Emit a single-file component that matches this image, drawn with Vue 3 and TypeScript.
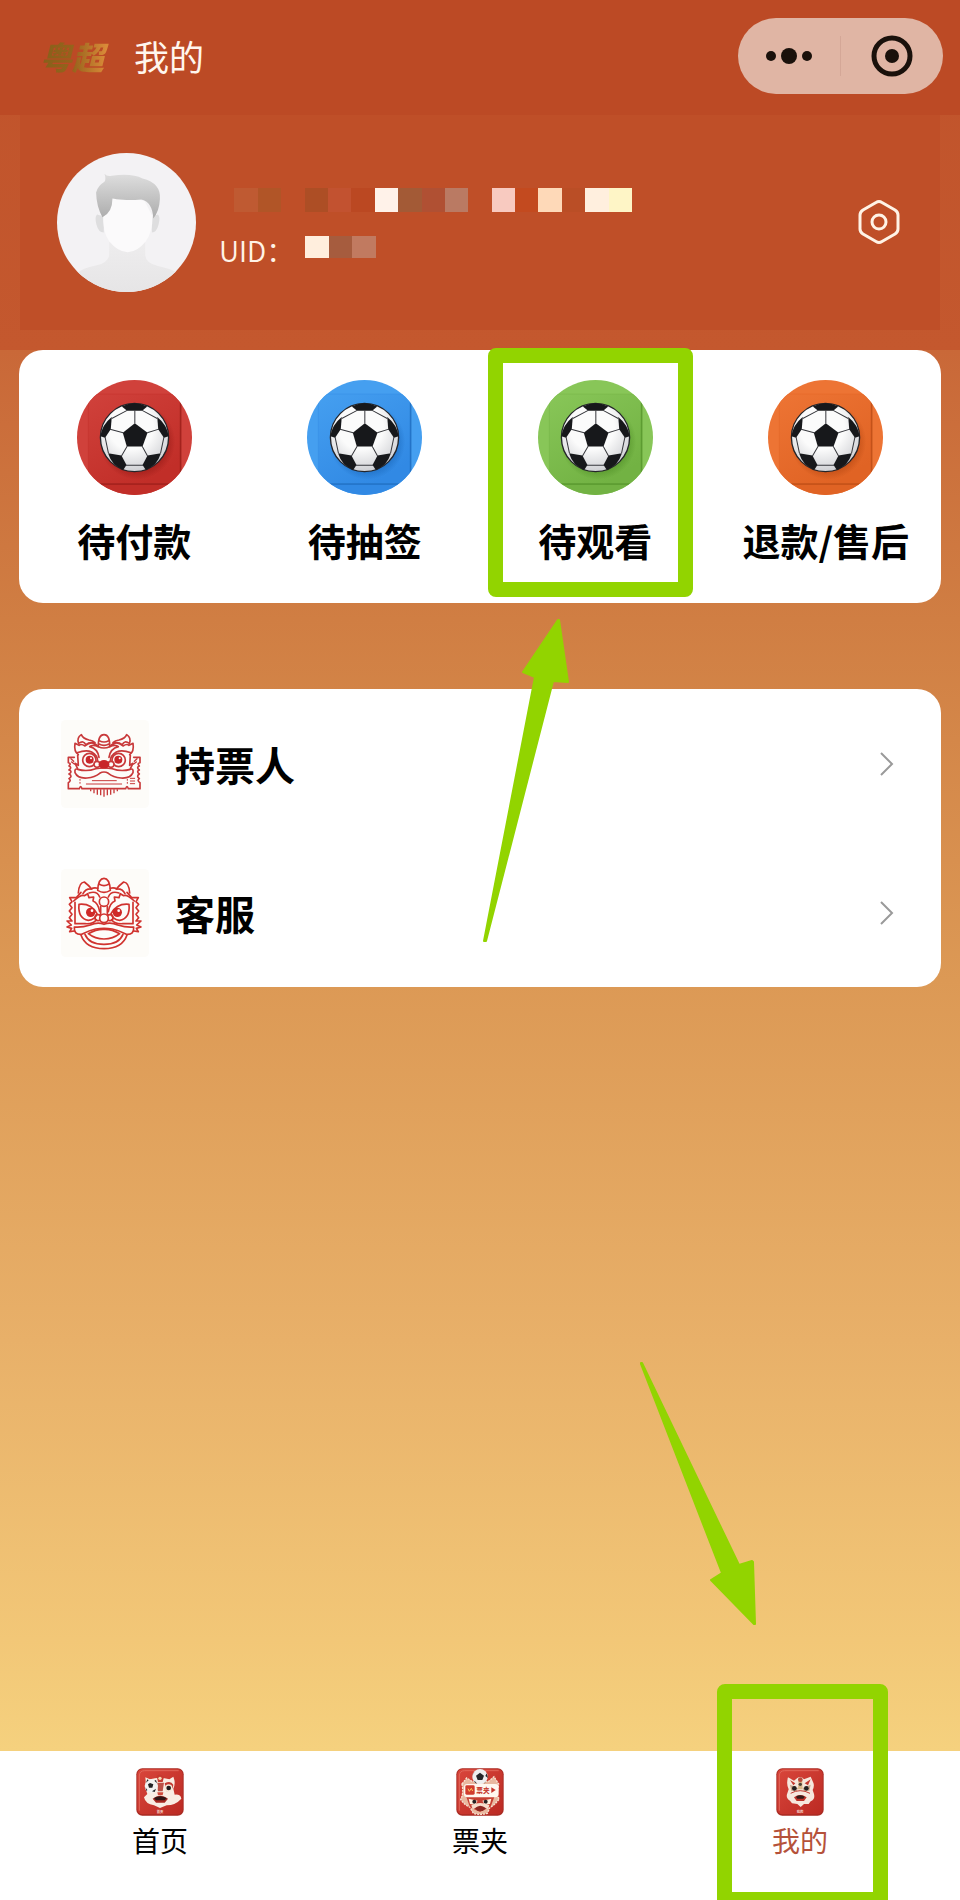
<script setup lang="ts">
interface Cell { at: number; color: string }
interface Quick { label: string; from: string; to: string; edge: string; marked?: boolean }

const nameCells: Cell[] = [
  { at: 1, color: '#bf5a32' }, { at: 2, color: '#b15527' }, { at: 4, color: '#ad4e25' },
  { at: 5, color: '#c25230' }, { at: 6, color: '#bb4822' }, { at: 7, color: '#fff2e9' },
  { at: 8, color: '#a35a36' }, { at: 9, color: '#b05033' }, { at: 10, color: '#ba7a63' },
  { at: 12, color: '#f8cac0' }, { at: 13, color: '#c34a1f' }, { at: 14, color: '#fed9b8' },
  { at: 15, color: '#ba4e26' }, { at: 16, color: '#ffefde' }, { at: 17, color: '#fef5c6' },
]
const uidCells: Cell[] = [
  { at: 0, color: '#ffeedd' }, { at: 1, color: '#a65c3e' }, { at: 2, color: '#c17a60' },
]
const quicks: Quick[] = [
  { label: '待付款', from: '#d0413b', to: '#c12e28', edge: '#8f1713' },
  { label: '待抽签', from: '#459ff0', to: '#3189e4', edge: '#1763b5' },
  { label: '待观看', from: '#88c658', to: '#72b243', edge: '#4b8a22', marked: true },
  { label: '退款/售后', from: '#ed7434', to: '#e06324', edge: '#b0430f' },
]
const rows = [
  { label: '持票人', icon: 'ticket' },
  { label: '客服', icon: 'service' },
]
const tabs = [
  { label: '首页', icon: 'home' },
  { label: '票夹', icon: 'wallet' },
  { label: '我的', icon: 'mine' },
]
</script>

<template>
  <div class="page">
    <div class="hero">
      <header class="bar">
        <span class="logo">粤超</span>
        <h1 class="title">我的</h1>
        <div class="capsule">
          <button class="cap-btn" type="button" aria-label="更多">
            <svg width="46" height="18" viewBox="0 0 46 18"><circle cx="5" cy="9" r="5" /><circle cx="23" cy="9" r="8" /><circle cx="41" cy="9" r="5" /></svg>
          </button>
          <span class="cap-line"></span>
          <button class="cap-btn" type="button" aria-label="关闭">
            <svg width="42" height="42" viewBox="0 0 42 42"><circle cx="21" cy="21" r="18" fill="none" stroke="#1a110b" stroke-width="5" /><circle cx="21" cy="21" r="7" /></svg>
          </button>
        </div>
      </header>

      <section class="profile">
        <svg class="avatar" viewBox="0 0 416 416">
          <defs>
            <clipPath id="face"><circle cx="208" cy="208" r="208" /></clipPath>
            <linearGradient id="hair" x1="0" y1="0" x2="0" y2="1"><stop offset="0" stop-color="#dedede" /><stop offset="1" stop-color="#acacac" /></linearGradient>
            <linearGradient id="neck" x1="0" y1="0" x2="0" y2="1"><stop offset="0" stop-color="#efeeef" /><stop offset="1" stop-color="#e6e5e6" /></linearGradient>
          </defs>
          <g clip-path="url(#face)">
            <rect width="416" height="416" fill="#f3f2f4" />
            <path d="M156 240V308Q150 330 116 337Q76 344 58 362V416H360V358Q340 346 302 338Q266 330 264 306V240Z" fill="url(#neck)" />
            <path d="M120 184Q112 190 118 214Q124 238 140 238V190ZM302 184Q310 190 304 214Q298 238 284 238V190Z" fill="#dededf" />
            <path d="M138 180L166 134Q230 132 262 144L286 190Q286 236 266 264Q240 296 212 297Q182 296 156 264Q136 236 138 180Z" fill="#fbfafb" />
            <path d="M142 62Q150 72 164 68Q224 60 256 76Q312 90 308 138Q306 176 288 196Q286 146 252 139Q222 142 198 140Q174 138 166 136Q166 178 136 192Q118 160 117 118Q122 98 142 86Q148 78 142 62Z" fill="url(#hair)" />
          </g>
        </svg>
        <div class="who">
          <svg class="name-mask" viewBox="0 0 18 1" preserveAspectRatio="none" shape-rendering="crispEdges" role="img" aria-label="昵称">
            <rect v-for="c in nameCells" :key="c.at" :x="c.at" y="0" width="1" height="1" :fill="c.color" />
          </svg>
          <div class="uid">
            <span>UID：</span>
            <svg class="uid-mask" viewBox="0 0 3 1" preserveAspectRatio="none" shape-rendering="crispEdges" role="img" aria-label="编号">
              <rect v-for="c in uidCells" :key="c.at" :x="c.at" y="0" width="1" height="1" :fill="c.color" />
            </svg>
          </div>
        </div>
        <button class="gear" type="button" aria-label="设置">
          <svg width="44" height="48" viewBox="0 0 44 48" fill="none" stroke="#fff3e6" stroke-width="3">
            <path d="M19 3.500Q22 1.500 25 3.500L38 11Q41 13 41 16V30Q41 33 38 35L25 42.500Q22 44.500 19 42.500L6 35Q3 33 3 30V16Q3 13 6 11Z" />
            <circle cx="22" cy="23" r="7" />
          </svg>
        </button>
      </section>
    </div>

    <main class="content">
      <section class="card quick">
        <button v-for="(q, i) in quicks" :key="q.label" class="tile" type="button">
          <svg class="ball" viewBox="0 0 344 344">
            <defs>
              <clipPath :id="`disc${i}`"><circle cx="172" cy="172" r="172" /></clipPath>
              <linearGradient :id="`bg${i}`" x1="0" y1="0" x2="0.600" y2="1"><stop offset="0" :stop-color="q.from" /><stop offset="1" :stop-color="q.to" /></linearGradient>
              <radialGradient :id="`sh${i}`"><stop offset="0.700" :stop-color="q.edge" stop-opacity="0.700" /><stop offset="1" :stop-color="q.edge" stop-opacity="0" /></radialGradient>
              <radialGradient :id="`wh${i}`" cx="0.450" cy="0.350" r="0.650"><stop offset="0.500" stop-color="#fbfbfb" /><stop offset="1" stop-color="#cfd0d4" /></radialGradient>
            </defs>
            <g :clip-path="`url(#disc${i})`">
              <rect width="344" height="344" :fill="q.from" />
              <path d="M0 310H344V344H0Z" :fill="q.to" />
              <rect x="34" y="42" width="276" height="268" :fill="`url(#bg${i})`" />
              <path d="M34 310V42H310" fill="none" :stroke="q.to" stroke-width="2" opacity="0.600" />
              <path d="M310 60V311H50" fill="none" :stroke="q.edge" stroke-width="5" opacity="0.650" />
              <circle cx="180" cy="184" r="114" :fill="`url(#sh${i})`" />
            </g>
            <circle cx="172" cy="172" r="102" :fill="`url(#wh${i})`" stroke="#24252a" stroke-width="4" />
            <g fill="#17181b">
              <path d="M173 129L211 158L196 199H149L137 158Z" />
              <path d="M134 79L150 92H195L210 79Q172 60 134 79Z" />
              <path d="M240 111L243 147L260 173L274 168Q269 134 240 111Z" />
              <path d="M104 111L101 147L84 173L70 168Q75 134 104 111Z" />
              <path d="M251 219L211 226L196 254L206 269Q240 256 251 219Z" />
              <path d="M93 219L133 226L148 254L138 269Q104 256 93 219Z" />
            </g>
            <path d="M173 130V91M210 158L245 147M195 198L211 227M150 198L133 227M138 158L99 147M195 91L240 115M150 91L104 115M260 171L250 219M84 171L94 219M146 255H198" fill="none" stroke="#36373c" stroke-width="3" />
          </svg>
          <span class="tile-label">{{ q.label }}</span>
          <span v-if="q.marked" class="mark"></span>
          <svg v-if="q.marked" class="arrow arrow-up" width="90" height="326" viewBox="482 618 90 326">
            <path d="M558 620L559 620L568 682L553 681L486 941L484 941L535 677L523 672Z" />
          </svg>
        </button>
      </section>

      <section class="card list">
        <a v-for="r in rows" :key="r.label" class="row" href="#">
          <svg v-if="r.icon === 'ticket'" class="lion" viewBox="66 54 264 264">
            <rect x="66" y="54" width="264" height="264" rx="14" fill="#fdfcf9" />
            <g fill="none" stroke="#c8393a" stroke-width="5" stroke-linejoin="round" stroke-linecap="round">
              <path d="M178 134Q177 98 195 98Q213 98 212 134Q195 142 178 134ZM181 116Q195 124 209 116M180 126Q195 134 210 126" />
              <path d="M119 124Q112 108 127 98Q132 110 150 114Q162 116 168 122Q150 120 140 128Q134 114 119 124" />
              <path d="M271 124Q278 108 263 98Q258 110 240 114Q228 116 222 122Q240 120 250 128Q256 114 271 124" />
              <path d="M118 158Q104 148 108 124L120 130Q126 124 138 132Q160 112 178 134Q160 126 152 134Q176 140 180 166" />
              <path d="M272 158Q286 148 282 124L270 130Q264 124 252 132Q230 112 212 134Q230 126 238 134Q214 140 210 166" />
              <path d="M114 152Q142 142 158 150Q176 160 176 178M276 152Q248 142 232 150Q214 160 214 178" />
              <path d="M116 160L118 190L108 184L116 200M274 160L272 190L282 184L274 200" />
              <circle cx="151" cy="174" r="20" /><circle cx="239" cy="174" r="20" />
              <circle cx="174" cy="187" r="9" fill="#fdfcf9" /><circle cx="216" cy="187" r="9" fill="#fdfcf9" />
              <path d="M116 202Q106 198 108 212Q116 230 144 228Q168 226 182 214Q195 206 208 214Q222 226 246 228Q274 230 282 212Q284 198 274 202Q246 210 220 200Q195 196 170 200Q144 210 116 202Z" />
              <path d="M106 166H88V182Q98 184 90 192Q100 196 90 204Q102 208 90 216Q102 222 90 230Q98 236 88 242V260H121Q125 248 129 260H260Q264 248 268 260H303V242Q293 236 301 230Q291 222 301 216Q291 208 301 204Q291 196 301 192Q293 184 303 182V166H284" />
              <path d="M96 170L104 178M294 170L286 178M98 180L106 186M292 180L284 186" stroke-width="4" />
              <path d="M142 246H248M160 236H232" stroke-width="3" />
              <path d="M123 232V250M265 232V250" stroke-dasharray="3 6" stroke-width="3" />
              <path d="M274 229H287M274 237H287M274 245H287" stroke-width="3" />
              <path d="M155 262V268M165 262V274M175 262V278M185 262V280M195 262V284M205 262V280M215 262V278M225 262V274M235 262V268" stroke-width="4" stroke-linecap="butt" />
            </g>
            <g fill="#c8272a"><circle cx="152" cy="173" r="12" /><circle cx="238" cy="173" r="12" /><ellipse cx="195" cy="187" rx="16" ry="13" /></g>
            <circle cx="156" cy="169" r="3" fill="#fff" /><circle cx="242" cy="169" r="3" fill="#fff" />
          </svg>
          <svg v-else class="lion" viewBox="66 504 264 264">
            <rect x="66" y="504" width="264" height="264" rx="14" fill="#fdfcf9" />
            <g fill="none" stroke="#d0332f" stroke-width="5" stroke-linejoin="round" stroke-linecap="round">
              <path d="M176 568Q178 532 195 532Q212 532 214 568Q195 580 176 568ZM181 550Q195 558 209 550" />
              <path d="M118 576Q120 544 136 543Q148 552 158 564Q140 562 132 578M272 576Q270 544 254 543Q242 552 232 564Q250 562 258 578" />
              <path d="M156 564Q166 558 176 562M234 564Q224 558 214 562M150 576Q174 568 182 588M240 576Q216 568 208 588" />
              <path d="M126 574L112 590L92 590L99 602L91 610L99 620L91 630L99 640L91 650L99 660L84 660L97 672L84 678L98 682L92 692L106 690" />
              <path d="M264 574L278 590L298 590L291 602L299 610L291 620L299 630L291 640L299 650L291 660L306 660L293 672L306 678L292 682L298 692L284 690" />
              <path d="M104 600Q126 580 136 584L146 578L150 590L164 588L162 600Q178 606 182 632" />
              <path d="M286 600Q264 580 254 584L244 578L240 590L226 588L228 600Q212 606 208 632" />
              <path d="M108 604V668H138Q162 670 172 656M282 604V668H252Q228 670 218 656" />
              <path d="M174 638Q156 606 120 610Q116 652 148 658Q168 656 174 638ZM216 638Q234 606 270 610Q274 652 242 658Q222 656 216 638Z" />
              <circle cx="195" cy="602" r="14" /><path d="M185 616V640M205 616V640" />
              <circle cx="177" cy="650" r="9" /><circle cx="213" cy="650" r="9" /><circle cx="195" cy="652" r="13" fill="#fdfcf9" />
              <path d="M106 678Q128 680 154 672Q176 662 195 670Q214 662 236 672Q262 680 284 678Q286 702 262 700Q240 688 220 684Q195 680 170 684Q150 688 128 700Q104 702 106 678Z" />
              <path d="M148 698Q172 684 195 685Q218 684 242 698Q222 714 195 714Q168 714 148 698Z" />
              <path d="M126 702Q140 743 195 743Q250 743 264 702M138 700Q150 730 195 730Q240 730 252 700" />
            </g>
            <g fill="#cf2a28"><circle cx="155" cy="634" r="14" /><circle cx="235" cy="634" r="14" /></g>
            <circle cx="159" cy="629" r="4" fill="#fff" /><circle cx="239" cy="629" r="4" fill="#fff" />
          </svg>
          <span class="row-label">{{ r.label }}</span>
          <svg class="chev" width="16" height="26" viewBox="0 0 16 26"><path d="M2 2L13 13L2 24" fill="none" stroke="#9a9a9a" stroke-width="2" /></svg>
        </a>
      </section>
    </main>

    <nav class="tabs">
      <a v-for="t in tabs" :key="t.label" class="tab" :class="{ on: t.icon === 'mine' }" href="#">
        <svg class="tab-icon" viewBox="0 0 144 144">
          <defs><linearGradient :id="`tb-${t.icon}`" x1="0" y1="0" x2="1" y2="1"><stop offset="0" stop-color="#d9463b" /><stop offset="1" stop-color="#bb2a23" /></linearGradient></defs>
          <rect x="1" y="1" width="142" height="142" rx="18" fill="#a92a22" />
          <rect x="4" y="3" width="136" height="136" rx="16" :fill="`url(#tb-${t.icon})`" />
          <path d="M10 128V24Q10 8 26 8H128" fill="none" stroke="#e0675a" stroke-width="3" />
          <g v-if="t.icon === 'home'">
            <path d="M28 28L42 34Q72 24 100 34L112 26Q120 46 112 62L116 80Q134 78 136 92Q118 112 92 112L72 120L54 112Q28 108 24 88L34 78Q26 60 30 50Z" fill="#f9ede3" />
            <path d="M62 24Q72 16 84 26L80 42H66Z" fill="#c6392f" /><circle cx="72" cy="31" r="5" fill="#f5d9b2" />
            <path d="M62 44H84L80 70H66Z" fill="#bc5146" />
            <path d="M86 46Q104 36 112 50Q112 68 92 70Z" fill="#c43a31" />
            <circle cx="98" cy="60" r="11" fill="#f7e9d8" /><circle cx="98" cy="60" r="7" fill="#1f1b1c" />
            <circle cx="46" cy="54" r="20" fill="#f2f2f2" />
            <path d="M42 45L52 49L49 59H39L36 49ZM30 44L38 37L34 34ZM55 38L63 46L60 36ZM28 58L34 66L32 70ZM48 70L60 62L56 72Z" fill="#202124" />
            <path d="M50 92Q72 74 96 92L86 104H60Z" fill="#a62820" /><path d="M54 90Q72 80 92 90L86 97H60Z" fill="#2e1615" />
            <path d="M64 73H82L80 82H66Z" fill="#d24b3c" />
            <text class="micro" x="72" y="135" text-anchor="middle">首页</text>
          </g>
          <g v-else-if="t.icon === 'wallet'">
            <path d="M18 48L32 30L48 40H98L114 26L128 48L122 84L130 92Q116 112 102 118L94 136Q72 142 52 136L42 118Q24 110 14 94Q24 76 18 48Z" fill="#e9b89f" stroke="#f8e3d3" stroke-width="4" stroke-dasharray="6 3" />
            <path d="M30 84H116L104 116L72 132L42 118Z" fill="#c73f32" />
            <circle cx="72" cy="26" r="23" fill="#eeeeef" />
            <path d="M72 14L84 23L79 36H65L60 23ZM50 20L58 10L48 22ZM92 16L96 30L88 24ZM52 38L60 42L62 48ZM86 44L92 38L84 48Z" fill="#25262a" />
            <path d="M34 48H118Q128 48 128 58V78Q128 88 118 88H34Q24 88 24 78V58Q24 48 34 48Z" fill="#fff7ef" />
            <rect x="28" y="52" width="28" height="28" rx="4" fill="#d13c2d" /><path d="M36 62L40 70L46 61L50 69" fill="none" stroke="#ffc45b" stroke-width="3" />
            <text class="ticket-text" x="81" y="75" text-anchor="middle">票夹</text>
            <path d="M106 58L119 66L106 75Z" fill="#c43228" />
            <path d="M38 92L65 98L58 110L42 108ZM106 92L79 98L86 110L102 108Z" fill="#fff0dd" />
            <circle cx="55" cy="101" r="6" fill="#262021" /><circle cx="89" cy="101" r="6" fill="#262021" />
            <path d="M46 112Q72 98 100 112L96 124Q72 108 50 124Z" fill="#f7ddcb" /><path d="M57 121Q72 106 90 121L80 129H65Z" fill="#8c2720" />
          </g>
          <g v-else>
            <path d="M36 28L54 38L64 30Q74 22 84 34L104 26L112 44Q116 54 110 66L114 78Q118 94 104 100L98 108L84 108L74 117L64 108L48 106L42 98Q28 90 34 76L38 64Q30 48 36 28Z" fill="#f6e8de" />
            <path d="M42 36L58 46L52 52ZM104 34L86 46L96 52Z" fill="#c5392f" />
            <path d="M68 32L78 30L80 64H66Z" fill="#d9b889" /><circle cx="73" cy="35" r="7" fill="#ba493a" /><circle cx="73" cy="49" r="5" fill="#4c4038" />
            <path d="M42 50L66 60L62 70L46 68ZM104 50L80 60L84 70L100 68Z" fill="#c7a58b" />
            <circle cx="55" cy="61" r="7" fill="#232021" /><circle cx="91" cy="61" r="7" fill="#232021" />
            <path d="M44 76Q72 60 102 76" fill="none" stroke="#c13a30" stroke-width="3" />
            <path d="M54 88Q72 74 92 88L84 99H62Z" fill="#bd3229" /><path d="M60 86Q72 78 86 86L82 92H64Z" fill="#361b19" />
            <text class="micro" x="72" y="135" text-anchor="middle">我的</text>
          </g>
        </svg>
        <span class="tab-label">{{ t.label }}</span>
        <span v-if="t.icon === 'mine'" class="mark"></span>
        <svg v-if="t.icon === 'mine'" class="arrow arrow-down" width="120" height="268" viewBox="638 1360 120 268">
          <path d="M641 1363L642 1363L739 1565L752 1561L753 1562L755 1624L754 1624L711 1580L722 1573L641 1364Z" />
        </svg>
      </a>
    </nav>
  </div>
</template>

<style>
body {
  margin: 0;
}
</style>

<style scoped>
.page {
  box-sizing: border-box;
  min-height: 100vh;
  display: flex;
  flex-direction: column;
  overflow: hidden;
  position: relative;
  font-family: "Liberation Sans", "Noto Sans CJK SC", sans-serif;
  background: linear-gradient(180deg, #c35a30 0, #c96838 350px, #d07e43 620px, #dc9955 980px, #e8b069 1340px, #f2c777 1640px, #f5d17e 1750px);
}
.hero {
  background: linear-gradient(180deg, #c0532b, #c4582e);
  padding-bottom: 20px;
}
.bar {
  height: 115px;
  box-sizing: border-box;
  display: flex;
  align-items: center;
  padding: 0 17px 4px 40px;
  background: #bc4a25;
}
.logo {
  width: 94px;
  font: italic 900 32px/40px "Noto Sans CJK SC", sans-serif;
  background: linear-gradient(90deg, #86601a, #96631c 35%, #d98a38 70%);
  background-clip: text;
  -webkit-background-clip: text;
  color: transparent;
}
.title {
  margin: 0;
  flex: 1;
  font: 400 35px/48px "Noto Sans CJK SC", sans-serif;
  color: #fff6ee;
}
.capsule {
  width: 205px;
  height: 76px;
  border-radius: 38px;
  background: #e0b5a4;
  display: flex;
  align-items: center;
}
.cap-btn {
  flex: 1;
  height: 76px;
  display: flex;
  align-items: center;
  justify-content: center;
  border: 0;
  padding: 0;
  background: none;
  fill: #1a110b;
}
.cap-line {
  width: 1px;
  height: 40px;
  background: #d4a797;
}
.profile {
  margin: 0 20px;
  height: 215px;
  box-sizing: border-box;
  padding: 0 39px 0 37px;
  display: flex;
  align-items: center;
  background: #bf4f28;
}
.avatar {
  width: 139px;
  height: 139px;
  flex: none;
}
.who {
  flex: 1;
  padding: 13px 0 0 15px;
}
.name-mask {
  display: block;
  width: 421px;
  height: 24px;
}
.uid {
  display: flex;
  align-items: center;
  gap: 11px;
  margin-top: 18px;
  padding-left: 8px;
  font: 350 28px/40px "Noto Sans CJK SC", sans-serif;
  color: #fff3e6;
}
.uid-mask {
  width: 71px;
  height: 22px;
  padding-bottom: 6px;
}
.gear {
  border: 0;
  padding: 0;
  background: none;
  display: flex;
}
.content {
  padding: 0 19px;
}
.card {
  background: #fff;
  border-radius: 24px;
}
.quick {
  display: grid;
  grid-template-columns: repeat(4, 1fr);
}
.tile {
  position: relative;
  display: flex;
  flex-direction: column;
  align-items: center;
  gap: 21px;
  padding: 30px 0 39px;
  border: 0;
  background: none;
}
.ball {
  width: 115px;
  height: 115px;
}
.tile-label {
  font: 700 38px/48px "Noto Sans CJK SC", sans-serif;
  color: #000;
  white-space: nowrap;
}
.mark {
  position: absolute;
  box-sizing: border-box;
  border: 15px solid #92d400;
  border-radius: 8px;
}
.tile .mark {
  left: 8px;
  top: -2px;
  width: 205px;
  height: 249px;
}
.arrow {
  position: absolute;
  fill: #92d400;
  stroke: #92d400;
  stroke-width: 2;
  stroke-linejoin: round;
  pointer-events: none;
}
.arrow-up {
  left: 2px;
  top: 268px;
}
.list {
  margin-top: 86px;
}
.row {
  display: flex;
  align-items: center;
  height: 149px;
  padding: 0 46px 0 42px;
  text-decoration: none;
  color: #000;
}
.lion {
  width: 88px;
  height: 88px;
}
.row-label {
  flex: 1;
  padding-left: 26px;
  font: 700 40px/48px "Noto Sans CJK SC", sans-serif;
}
.tabs {
  margin-top: auto;
  height: 149px;
  display: grid;
  grid-template-columns: repeat(3, 1fr);
  background: #fff;
}
.tab {
  position: relative;
  display: flex;
  flex-direction: column;
  align-items: center;
  gap: 4px;
  padding-top: 17px;
  color: #000;
  text-decoration: none;
}
.tab.on {
  color: #b5523a;
}
.tab-icon {
  width: 48px;
  height: 48px;
}
.tab-label {
  font: 400 28px/40px "Noto Sans CJK SC", sans-serif;
}
.micro {
  font: 700 10px "Noto Sans CJK SC", sans-serif;
  fill: #f6d9cf;
}
.ticket-text {
  font: 700 20px "Noto Sans CJK SC", sans-serif;
  fill: #c43228;
}
.tab .mark {
  left: 77px;
  top: -67px;
  width: 171px;
  height: 223px;
}
.arrow-down {
  left: -2px;
  top: -391px;
}
</style>
